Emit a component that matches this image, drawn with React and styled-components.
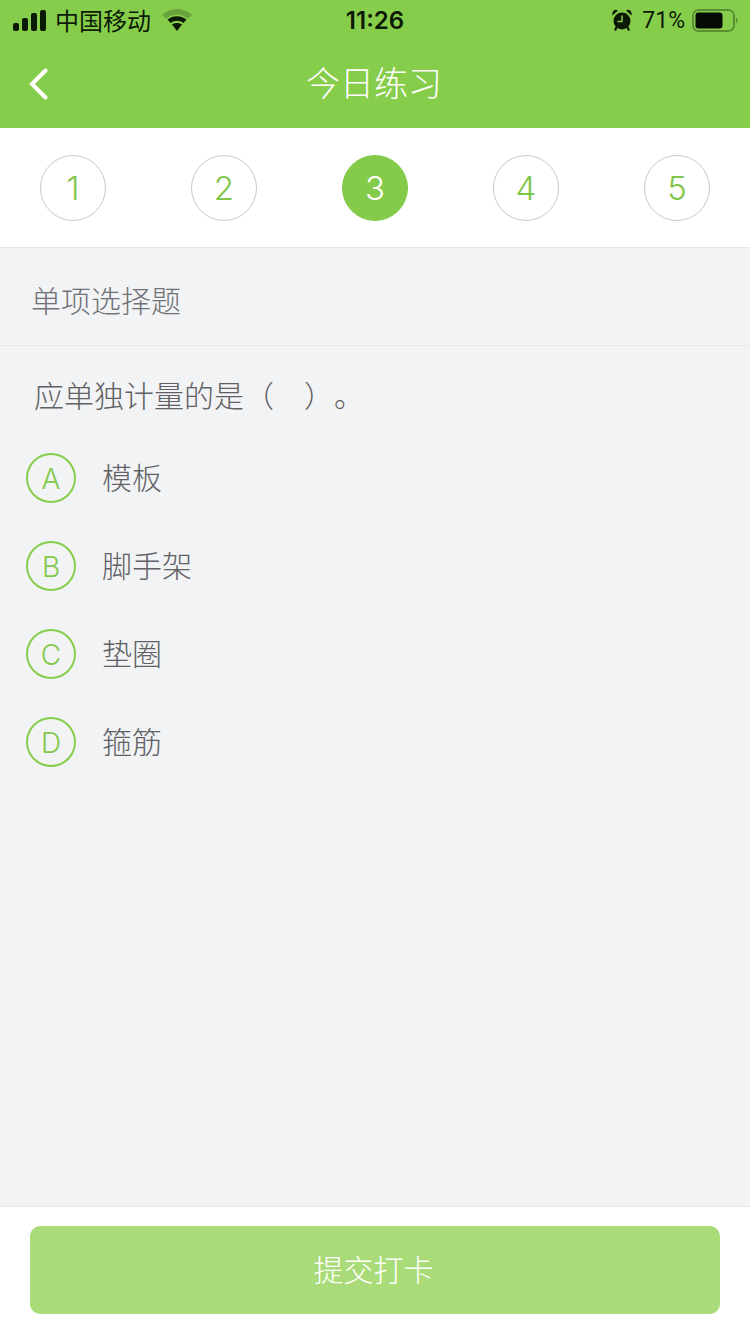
import React from 'react';
import styled, { createGlobalStyle } from 'styled-components';

const GlobalStyle = createGlobalStyle`
  html, body {
    margin: 0;
    padding: 0;
    background: #f2f3f5;
    font-family: "Liberation Sans", "Noto Sans CJK SC", sans-serif;
  }
  * { box-sizing: border-box; }
`;

const Page = styled.div`
  width: 750px;
  height: 1334px;
  display: flex;
  flex-direction: column;
  overflow: hidden;
  background: #f2f3f5;
`;

const Header = styled.header`
  height: 128px;
  background: #87cd4c;
  flex-shrink: 0;
`;

const StatusBar = styled.div`
  height: 40px;
  padding: 0 12px 0 13px;
  display: flex;
  align-items: center;
  justify-content: space-between;
  color: #0b1a04;
  position: relative;
`;

const StatusGroup = styled.div`
  display: flex;
  align-items: center;
`;

const Carrier = styled.span`
  font-size: 24px;
  line-height: 1;
  margin: 0 11px 0 8px;
  font-family: "Noto Sans CJK SC", sans-serif;
`;

const Clock = styled.span`
  position: absolute;
  left: 0;
  right: 0;
  text-align: center;
  font-size: 24px;
  font-weight: 600;
  font-family: "Inter", "Liberation Sans", sans-serif;
`;

const Percent = styled.span`
  font-size: 23px;
  margin: 0 7px 0 10px;
  font-family: "Roboto", sans-serif;
`;

const NavBar = styled.div`
  height: 88px;
  display: flex;
  align-items: center;
  justify-content: center;
  position: relative;
`;

const BackIcon = styled.svg`
  position: absolute;
  left: 28px;
  top: 27px;
`;

const Title = styled.h1`
  margin: 0 2px 4px 0;
  font-size: 34px;
  line-height: 84px;
  color: #fff;
  font-family: "Noto Sans CJK SC", sans-serif;
  font-weight: 300;
`;

const Steps = styled.div`
  height: 120px;
  flex-shrink: 0;
  padding: 0 40px;
  background: #fff;
  border-bottom: 1px solid #e6e7e9;
  display: flex;
  align-items: center;
  justify-content: space-between;
`;

const Step = styled.div`
  width: 66px;
  height: 66px;
  margin-top: 1px;
  border-radius: 50%;
  display: flex;
  align-items: center;
  justify-content: center;
  font-family: "Inter", sans-serif;
  font-weight: 300;
  font-size: 33px;
  color: ${(p) => (p.$active ? '#fff' : '#7fc648')};
  background: ${(p) => (p.$active ? '#84cb4a' : '#fff')};
  border: 1px solid ${(p) => (p.$active ? '#84cb4a' : '#c9c9c9')};
`;

const SectionLabel = styled.div`
  height: 98px;
  flex-shrink: 0;
  padding: 4px 0 0 31px;
  border-bottom: 1px solid #e6e7e9;
  display: flex;
  align-items: center;
  font-size: 30px;
  color: #707275;
  font-family: "Noto Sans CJK SC", sans-serif;
  font-weight: 300;
`;

const Content = styled.main`
  flex: 1;
`;

const Question = styled.p`
  margin: 0;
  height: 88px;
  padding: 8px 0 0 34px;
  display: flex;
  align-items: center;
  font-size: 30px;
  color: #5f6164;
  font-family: "Noto Sans CJK SC", sans-serif;
  font-weight: 300;
  white-space: pre;
  text-spacing-trim: space-all;
`;

const Options = styled.ul`
  list-style: none;
  margin: 0;
  padding: 0 0 0 26px;
`;

const Option = styled.li`
  height: 88px;
  display: flex;
  align-items: center;
  gap: 26px;
`;

const OptionMark = styled.span`
  width: 50px;
  height: 50px;
  border-radius: 50%;
  border: 2px solid #87cd4c;
  display: flex;
  align-items: center;
  justify-content: center;
  font-family: "Inter", sans-serif;
  font-weight: 300;
  font-size: 28px;
  padding-top: 1px;
  color: #82c94a;
`;

const OptionText = styled.span`
  font-size: 30px;
  line-height: 1;
  margin-top: -4px;
  color: #5f6164;
  font-family: "Noto Sans CJK SC", sans-serif;
  font-weight: 300;
`;

const Footer = styled.footer`
  height: 128px;
  flex-shrink: 0;
  padding: 19px 30px 0;
  background: #fff;
  border-top: 1px solid #e6e7e9;
`;

const SubmitButton = styled.button`
  width: 690px;
  height: 88px;
  padding: 0 3px 4px 0;
  border: 0;
  border-radius: 10px;
  background: #a9dc78;
  color: #fff;
  font-size: 30px;
  font-family: "Noto Sans CJK SC", sans-serif;
  font-weight: 300;
`;

const steps = [1, 2, 3, 4, 5];
const options = [
  ['A', '模板'],
  ['B', '脚手架'],
  ['C', '垫圈'],
  ['D', '箍筋'],
];

function SignalIcon() {
  return (
    <svg width="34" height="21" viewBox="0 0 34 21">
      <rect x="0" y="13" width="6" height="8" rx="2" fill="#0b1a04" />
      <rect x="9" y="8" width="6" height="13" rx="2" fill="#0b1a04" />
      <rect x="18" y="3" width="6" height="18" rx="2" fill="#0b1a04" />
      <rect x="27" y="0" width="6" height="21" rx="2" fill="#0b1a04" />
    </svg>
  );
}

function WifiIcon() {
  return (
    <svg width="30" height="22" viewBox="0 0 30 22">
      <path d="M0 6 C8 -2 22 -2 30 6 L26 9.5 C19 4 11 4 4 9.5 Z" fill="#69a33d" />
      <path d="M5.5 10.5 C11 6 19 6 24.5 10.5 L21.5 14 C17.5 11 12.5 11 8.5 14 Z" fill="#0b1a04" />
      <path d="M10 15.5 C13 13.5 17 13.5 20 15.5 L15 22 Z" fill="#0b1a04" />
    </svg>
  );
}

function AlarmIcon() {
  return (
    <svg width="20" height="22" viewBox="0 0 20 22">
      <circle cx="10" cy="12" r="8.5" fill="#0b1a04" />
      <path d="M0.5 6.5 C-0.5 2 3 -0.5 6 1.5 Z M19.5 6.5 C20.5 2 17 -0.5 14 1.5 Z" fill="#0b1a04" />
      <path d="M4.5 18 L3 21.5 M15.5 18 L17 21.5" stroke="#0b1a04" strokeWidth="2.2" />
      <path d="M10 6.5 V12.5 H5.5" stroke="#87cd4c" strokeWidth="1.5" fill="none" />
    </svg>
  );
}

function BatteryIcon() {
  return (
    <svg width="46" height="23" viewBox="0 0 46 23">
      <rect x="1" y="1" width="41" height="21" rx="5.5" fill="none" stroke="#5b8f33" strokeWidth="2" />
      <rect x="3.5" y="3.5" width="27" height="16" rx="3" fill="#050a02" />
      <path d="M44 8.5 C46 9.5 46 13.5 44 14.5 Z" fill="#5b8f33" />
    </svg>
  );
}

export default function App() {
  return (
    <Page>
      <GlobalStyle />
      <Header>
        <StatusBar>
          <StatusGroup>
            <SignalIcon />
            <Carrier>中国移动</Carrier>
            <WifiIcon />
          </StatusGroup>
          <Clock>11:26</Clock>
          <StatusGroup>
            <AlarmIcon />
            <Percent>71%</Percent>
            <BatteryIcon />
          </StatusGroup>
        </StatusBar>
        <NavBar>
          <BackIcon width="20" height="34" viewBox="0 0 20 34">
            <path d="M17.5 3.5 L4 17 L17.5 30.5" fill="none" stroke="#fff" strokeWidth="4" strokeLinecap="round" strokeLinejoin="miter" />
          </BackIcon>
          <Title>今日练习</Title>
        </NavBar>
      </Header>
      <Steps>
        {steps.map((n) => (
          <Step key={n} $active={n === 3}>{n}</Step>
        ))}
      </Steps>
      <SectionLabel>单项选择题</SectionLabel>
      <Content>
        <Question>应单独计量的是（　）。</Question>
        <Options>
          {options.map(([mark, text]) => (
            <Option key={mark}>
              <OptionMark>{mark}</OptionMark>
              <OptionText>{text}</OptionText>
            </Option>
          ))}
        </Options>
      </Content>
      <Footer>
        <SubmitButton>提交打卡</SubmitButton>
      </Footer>
    </Page>
  );
}
